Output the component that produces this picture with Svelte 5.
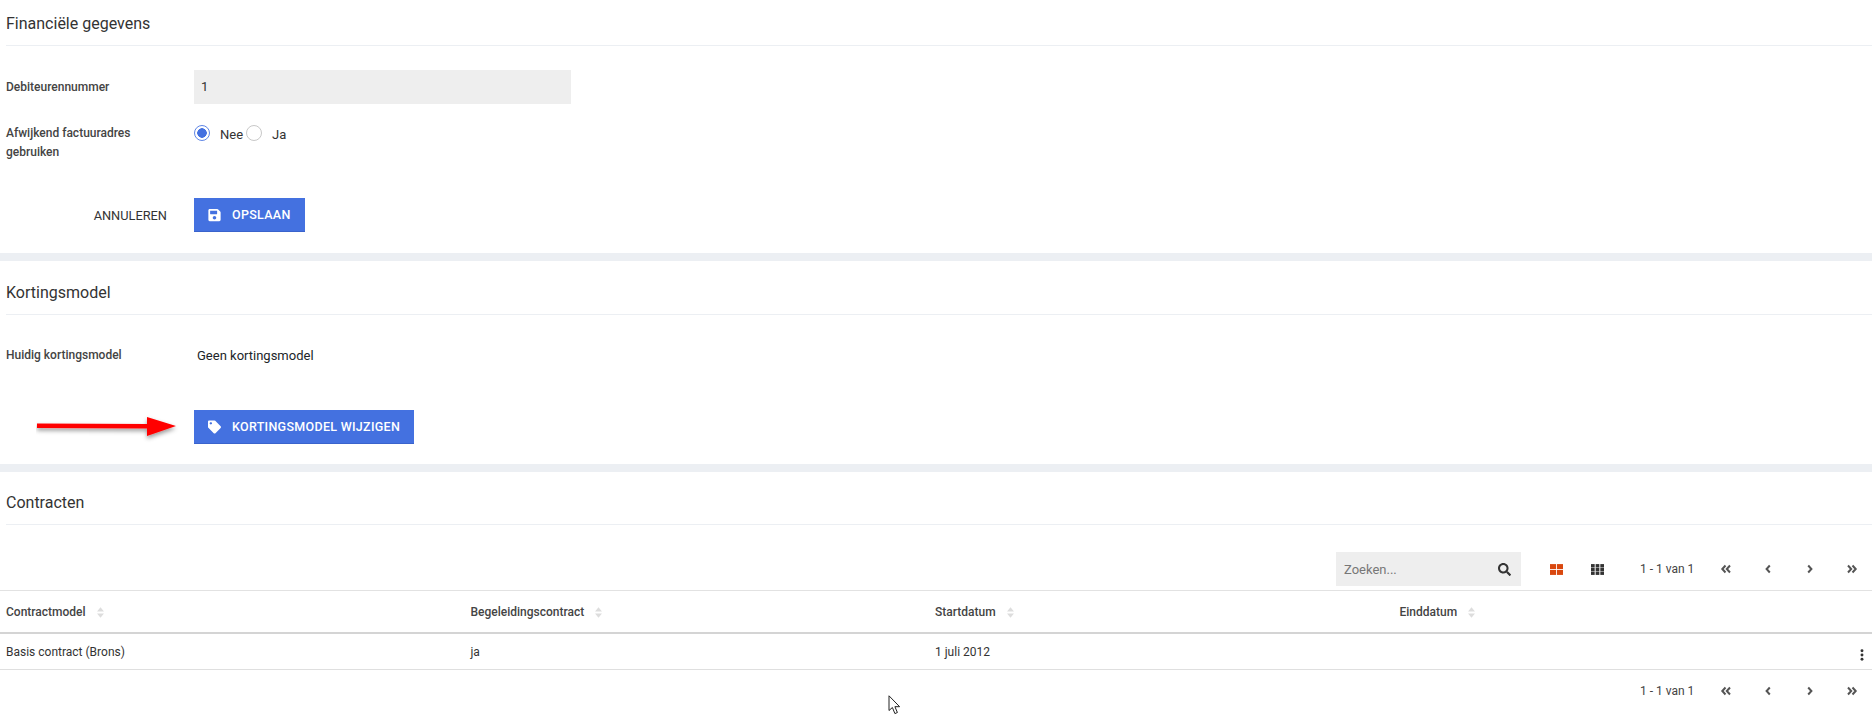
<script lang="ts">
  const columns = ["Contractmodel", "Begeleidingscontract", "Startdatum", "Einddatum"];
  const row = ["Basis contract (Brons)", "ja", "1 juli 2012", ""];
</script>

{#snippet pager()}
  <span class="range">1 - 1 van 1</span>
  <div class="pager">
    <svg viewBox="0 0 12 12"><path d="M5.5 2.5 2.3 6l3.2 3.5M10 2.5 6.8 6l3.2 3.5" /></svg>
    <svg viewBox="0 0 12 12"><path d="M7.8 2.5 4.6 6l3.2 3.5" /></svg>
    <svg viewBox="0 0 12 12"><path d="M4.2 2.5 7.4 6 4.2 9.5" /></svg>
    <svg viewBox="0 0 12 12"><path d="M2 2.5 5.2 6 2 9.5M6.5 2.5 9.7 6 6.5 9.5" /></svg>
  </div>
{/snippet}

<div class="page">
  <section class="first">
    <h2>Financiële gegevens</h2>
    <div class="form-row field">
      <span class="label">Debiteurennummer</span>
      <div class="input">1</div>
    </div>
    <div class="form-row radios">
      <span class="label">Afwijkend factuuradres<br />gebruiken</span>
      <div class="radio-group">
        <span class="radio on"></span><span class="opt nee">Nee</span>
        <span class="radio"></span><span class="opt ja">Ja</span>
      </div>
    </div>
    <div class="form-row actions">
      <span class="cancel">ANNULEREN</span>
      <button type="button" class="btn">
        <svg viewBox="0 0 448 512"><path d="M433.941 129.941l-83.882-83.882A48 48 0 0 0 316.118 32H48C21.49 32 0 53.49 0 80v352c0 26.51 21.49 48 48 48h352c26.51 0 48-21.49 48-48V163.882a48 48 0 0 0-14.059-33.941zM224 416c-35.346 0-64-28.654-64-64 0-35.346 28.654-64 64-64s64 28.654 64 64c0 35.346-28.654 64-64 64zm96-304.52V212c0 6.627-5.373 12-12 12H76c-6.627 0-12-5.373-12-12V108c0-6.627 5.373-12 12-12h228.52c3.183 0 6.235 1.264 8.485 3.515l3.48 3.48A11.996 11.996 0 0 1 320 111.48z" /></svg>
        OPSLAAN
      </button>
    </div>
  </section>

  <section>
    <h2>Kortingsmodel</h2>
    <div class="form-row current">
      <span class="label">Huidig kortingsmodel</span>
      <span class="value">Geen kortingsmodel</span>
    </div>
    <div class="form-row change">
      <span></span>
      <button type="button" class="btn">
        <svg viewBox="0 0 512 512"><path d="M0 252.118V48C0 21.49 21.49 0 48 0h204.118a48 48 0 0 1 33.941 14.059l211.882 211.882c18.745 18.745 18.745 49.137 0 67.882L293.823 497.941c-18.745 18.745-49.137 18.745-67.882 0L14.059 286.059A48 48 0 0 1 0 252.118zM112 64c-26.51 0-48 21.49-48 48s21.49 48 48 48 48-21.49 48-48-21.49-48-48-48z" /></svg>
        KORTINGSMODEL WIJZIGEN
      </button>
    </div>
  </section>

  <section class="contracts">
    <h2>Contracten</h2>
    <div class="toolbar">
      <div class="search">
        <span>Zoeken...</span>
        <svg viewBox="0 0 512 512"><path d="M505 442.7L405.3 343c-4.5-4.5-10.6-7-17-7H372c27.6-35.3 44-79.7 44-128C416 93.1 322.9 0 208 0S0 93.1 0 208s93.1 208 208 208c48.3 0 92.7-16.4 128-44v16.3c0 6.4 2.5 12.5 7 17l99.7 99.7c9.4 9.4 24.6 9.4 33.9 0l28.3-28.3c9.4-9.4 9.4-24.6.1-34zM208 336c-70.7 0-128-57.2-128-128 0-70.7 57.2-128 128-128 70.7 0 128 57.2 128 128 0 70.7-57.2 128-128 128z" /></svg>
      </div>
      <svg class="view orange" viewBox="0 0 12 10">
        <rect width="5.6" height="4.6" /><rect x="6.4" width="5.6" height="4.6" />
        <rect y="5.4" width="5.6" height="4.6" /><rect x="6.4" y="5.4" width="5.6" height="4.6" />
      </svg>
      <svg class="view dark" viewBox="0 0 12 10">
        {#each [0, 3.45, 6.9] as y}
          {#each [0, 4.3, 8.6] as x}
            <rect {x} {y} width="3.4" height="3.1" />
          {/each}
        {/each}
      </svg>
      {@render pager()}
    </div>

    <div class="thead">
      {#each columns as col}
        <div class="cell">
          {col}
          <svg class="sort" viewBox="0 0 8 12"><path d="M4 0 8 4.8H0zM4 12 0 7.2h8z" /></svg>
        </div>
      {/each}
    </div>
    <div class="tbody">
      {#each row as val}
        <div class="cell">{val}</div>
      {/each}
      <svg class="kebab" viewBox="0 0 4 14">
        <circle cx="2" cy="2" r="1.7" /><circle cx="2" cy="7" r="1.7" /><circle cx="2" cy="12" r="1.7" />
      </svg>
    </div>
    <div class="footer">
      {@render pager()}
    </div>
  </section>

  <!-- annotation drawn on top of the screenshot -->
  <svg class="arrow" width="150" height="32" viewBox="0 0 150 32">
    <defs>
      <filter id="shade" x="-10%" y="-50%" width="120%" height="220%">
        <feDropShadow dx="0" dy="2.5" stdDeviation="2" flood-color="#000" flood-opacity="0.4" />
      </filter>
    </defs>
    <path d="M1 8.500 111 9V2L140 11 111 21V13.500L1 13z" fill="#f00" filter="url(#shade)" />
  </svg>

  <svg class="cursor" width="13" height="20" viewBox="0 0 13 20">
    <path d="M1 .8V15.5L4.4 12.5 6.9 18.6 9.4 17.5 6.9 11.700H11.600z" fill="#fff" stroke="#222" stroke-width="1" />
  </svg>
</div>

<style>
  :global(body) {
    margin: 0;
    background: #fff;
  }

  .page {
    position: relative;
    height: 715px;
    overflow: hidden;
    font-family: Roboto, "Liberation Sans", sans-serif;
    font-size: 13px;
    color: #212529;
  }

  section {
    padding: 20px 0 20px;
    border-bottom: 8px solid #eceff3;
  }

  section.first {
    padding-top: 12px;
    padding-bottom: 21px;
  }

  section.contracts {
    padding: 19px 0 0;
    border-bottom: 0;
  }

  h2 {
    margin: 0 0 0 6px;
    padding-bottom: 9px;
    border-bottom: 1px solid #eceff3;
    font-size: 16px;
    font-weight: 400;
    line-height: 24px;
    color: #333;
  }

  .form-row {
    display: grid;
    grid-template-columns: 188px 1fr;
    padding-left: 6px;
    align-items: center;
  }

  .label {
    font-weight: 500;
    font-size: 12px;
    line-height: 19px;
    color: #444;
  }

  .field {
    margin-top: 24px;
  }

  .input {
    width: 377px;
    height: 34px;
    line-height: 34px;
    padding-left: 7px;
    box-sizing: border-box;
    background: #eeeeee;
    color: #333;
  }

  .radios {
    margin-top: 20px;
    align-items: start;
  }

  .radio-group {
    display: flex;
    align-items: center;
    height: 19px;
    margin-top: -1px;
  }

  .radio {
    width: 16px;
    height: 16px;
    box-sizing: border-box;
    border-radius: 50%;
    border: 1px solid #c8c8c8;
    background: #fff;
  }

  .radio.on {
    border: 1.5px solid #5f86e6;
    background: radial-gradient(circle, #4471e0 0 4.5px, #fff 5px);
  }

  .opt {
    margin-top: 3px;
    color: #333;
  }

  .nee {
    margin: 3px 3px 0 10px;
  }

  .ja {
    margin-left: 10px;
  }

  .actions {
    margin-top: 36px;
  }

  .cancel {
    justify-self: end;
    margin-right: 27px;
    font-size: 12.8px;
    color: #333;
  }

  .btn {
    display: inline-flex;
    align-items: center;
    justify-self: start;
    gap: 11px;
    height: 34px;
    padding: 0 14px;
    border: 0;
    border-bottom: 1px solid #3a63cc;
    background: #4471e0;
    color: #fff;
    font-family: inherit;
    font-size: 12.5px;
    font-weight: 500;
    letter-spacing: 0.3px;
  }

  .btn svg {
    width: 13px;
    height: 14px;
    fill: #fff;
  }

  .current {
    margin-top: 31px;
    height: 19px;
  }

  .value {
    padding-left: 3px;
  }

  .change {
    margin-top: 45px;
  }

  .toolbar {
    display: flex;
    align-items: center;
    justify-content: flex-end;
    margin-top: 27px;
    height: 34px;
    padding-right: 14px;
  }

  .search {
    display: flex;
    align-items: center;
    justify-content: space-between;
    width: 185px;
    height: 34px;
    box-sizing: border-box;
    padding: 0 10px 0 8px;
    background: #eeeeee;
    color: #777;
  }

  .search svg {
    width: 13px;
    height: 13px;
    fill: #333;
  }

  .view {
    width: 13px;
    height: 11px;
  }

  .view.orange {
    margin-left: 29px;
    fill: #d9480f;
  }

  .view.dark {
    margin-left: 28px;
    fill: #333;
  }

  .range {
    margin-left: 36px;
    width: 52px;
    font-size: 12px;
    white-space: nowrap;
    color: #444;
  }

  .pager {
    display: flex;
    gap: 30px;
    margin-left: 28px;
  }

  .pager svg {
    width: 12px;
    height: 12px;
    fill: none;
    stroke: #555;
    stroke-width: 2;
  }

  .thead,
  .tbody {
    position: relative;
    display: grid;
    grid-template-columns: repeat(4, 464.5px) 1fr;
  }

  .thead {
    margin-top: 4px;
    height: 40px;
    padding-top: 1px;
    align-items: center;
    border-top: 1px solid #e2e2e2;
    border-bottom: 2px solid #d4d4d4;
    font-weight: 500;
    font-size: 12px;
    color: #444;
  }

  .tbody {
    height: 35px;
    align-items: center;
    border-bottom: 1px solid #dfdfdf;
    color: #333;
    font-size: 12px;
  }

  .cell {
    display: flex;
    align-items: center;
    padding-left: 6px;
  }

  .sort {
    width: 7px;
    height: 11px;
    margin-left: 11px;
    fill: #ddd;
  }

  .kebab {
    position: absolute;
    right: 8px;
    top: 15px;
    width: 4px;
    height: 12px;
    fill: #333;
  }

  .footer {
    display: flex;
    align-items: center;
    justify-content: flex-end;
    height: 42px;
    padding-right: 14px;
  }

  .arrow {
    position: absolute;
    left: 36px;
    top: 415px;
  }

  .cursor {
    position: absolute;
    left: 888px;
    top: 695px;
  }
</style>
